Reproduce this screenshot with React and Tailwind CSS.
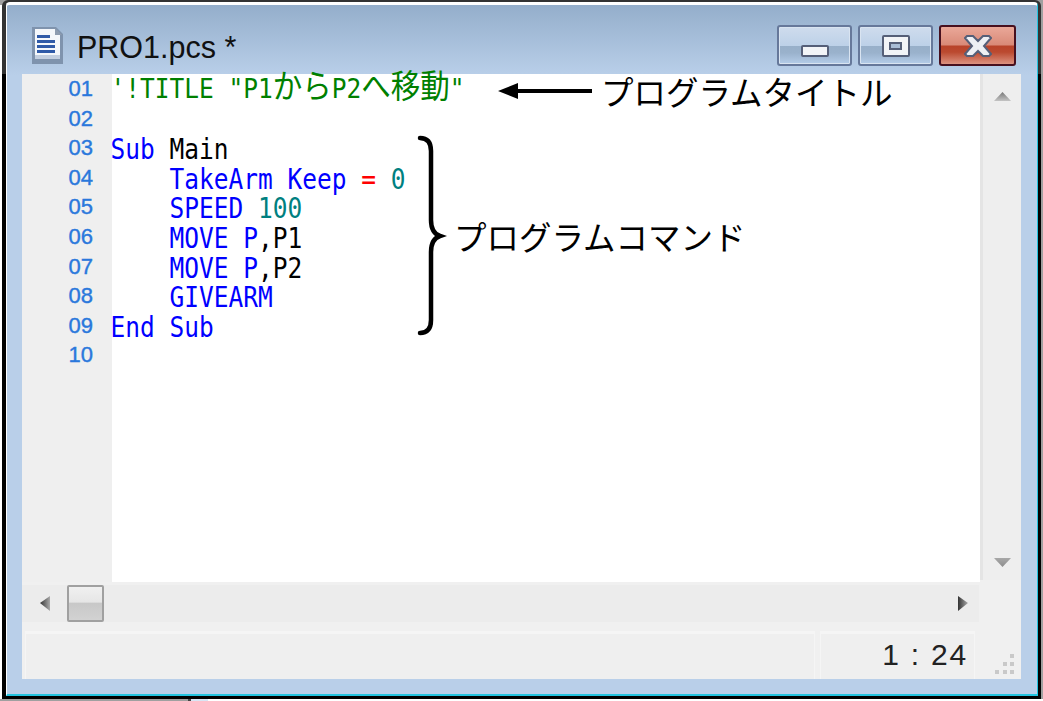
const lineNumbers = ['01', '02', '03', '04', '05', '06', '07', '08', '09', '10']

function Wide({ children }) {
  return <span className="text-[29.5px] leading-none" style={{ fontFamily: '"Noto Sans CJK JP", sans-serif' }}>{children}</span>
}

function CodeLine({ children, up }) {
  return (
    <div className="h-[29.6px] leading-[29.6px] whitespace-pre">
      <span className={up ? 'inline-block origin-center -translate-x-[1.5px] -translate-y-[4px] scale-y-[1.1] leading-[25px]' : 'inline-block origin-center -translate-x-[1.5px] translate-y-[1px] scale-y-[1.18] leading-[25px]'}>{children}</span>
    </div>
  )
}

function DocIcon() {
  return (
    <svg width="31" height="37" viewBox="0 0 31 37" className="shrink-0">
      <path d="M0 0H24L31 7V37H0Z" fill="#7f93ad" />
      <path d="M3 2H23L28 7V32H3Z" fill="#f4f7fb" />
      <path d="M3 28H28V32H3Z" fill="#c3cfe0" />
      <path d="M23 1L30 8H23Z" fill="#8d9cb0" />
      <g fill="#2f5aa8">
        <rect x="5" y="8" width="13" height="3" />
        <rect x="5" y="13" width="18" height="3" />
        <rect x="5" y="18" width="18" height="3" />
        <rect x="5" y="23" width="18" height="3" />
      </g>
    </svg>
  )
}

function CaptionButton({ children }) {
  return (
    <div className="flex h-[41px] w-[75px] items-center justify-center rounded-[3px] border-2 border-[#66789a] bg-[linear-gradient(to_bottom,#cfdced_0%,#bdd1e8_50%,#97afc9_51%,#9ab2cc_70%,#b5cde9_100%)] shadow-[inset_0_0_0_1px_#d9e4f1]">
      {children}
    </div>
  )
}

function Triangle({ points, id, from, to, w = 17, h = 10, x2 = 0, y2 = 1 }) {
  return (
    <svg width={w} height={h} viewBox={`0 0 ${w} ${h}`}>
      <defs>
        <linearGradient id={id} x1="0" y1="0" x2={x2} y2={y2}>
          <stop offset="0" stopColor={from} />
          <stop offset="1" stopColor={to} />
        </linearGradient>
      </defs>
      <polygon points={points} fill={`url(#${id})`} />
    </svg>
  )
}

export default function App() {
  return (
    <div className="relative h-[701px] w-[1043px] overflow-hidden bg-white" style={{ fontFamily: '"Liberation Sans", sans-serif' }}>
      <div className="flex h-[699px] bg-[#a0a0a0]">
        <div className="w-[2px] shrink-0 bg-[linear-gradient(to_bottom,#a0a0a0_5px,#ffffff_5px)]" />

        {/* Window frame */}
        <div className="h-full w-[1039px] shrink-0 rounded-t-[6px] bg-[linear-gradient(to_bottom,#333333_74px,#000000_74px)] pb-[3px] pl-[4px] pr-[3px] pt-[2px]">
          <div className="flex h-full flex-col rounded-t-[4px] border-b-2 border-l border-r border-t-[3px] border-b-[#22c4e0] border-l-white border-r-[#22c4e0] border-t-white bg-[linear-gradient(to_bottom,#94aecb_0px,#b9cfe9_70px,#b9cfe9_100%)] pb-[15px] pl-[15px] pr-[16px]">
            {/* Title bar */}
            <div className="flex h-[69px] shrink-0 items-start pr-[5px]">
              <div className="flex flex-1 items-center pl-[10px] pt-[22px]">
                <DocIcon />
                <span className="ml-[14px] mt-[3px] whitespace-pre text-[30.5px] leading-none text-[#111111]">PRO1.pcs *</span>
              </div>
              <div className="flex gap-[6px] pt-[20px]">
                <CaptionButton>
                  <div className="mt-[10px] h-[12px] w-[28px] rounded-[2px] border-2 border-[#555f78] bg-[#f2f4f7]" />
                </CaptionButton>
                <CaptionButton>
                  <div className="flex h-[22px] w-[28px] items-center justify-center rounded-[2px] border-2 border-[#555f78] bg-[#f2f4f7]">
                    <div className="h-[8px] w-[13px] border-2 border-[#555f78] bg-[#a9bdd6]" />
                  </div>
                </CaptionButton>
                <div className="flex h-[41px] w-[77px] items-center justify-center rounded-[3px] border-2 border-[#47101f] bg-[linear-gradient(to_bottom,#eaa899_0%,#d98a78_48%,#b8432a_52%,#bb4a30_68%,#dc9280_100%)]">
                  <svg width="28" height="22" viewBox="0 0 28 22">
                    <path d="M1 3L3 1H9L14 6L19 1H25L27 3L20 11L27 19L25 21H19L14 16L9 21H3L1 19L8 11Z" fill="#eef0f4" stroke="#555f78" strokeWidth="2" />
                  </svg>
                </div>
              </div>
            </div>

            {/* Client area */}
            <div className="flex min-h-0 flex-1 flex-col bg-[#f0f0f0]">
              <div className="flex h-[511px] shrink-0">
                <div className="flex h-[508px] w-[958px] shrink-0">
                  {/* Line numbers */}
                  <div className="w-[90px] shrink-0 bg-[#efefef] pr-[19px] text-right text-[22px] text-[#2a78dc] [-webkit-text-stroke:0.4px_#2a78dc]">
                    {lineNumbers.map((n) => (
                      <div key={n} className="h-[29.6px] leading-[29.6px]">{n}</div>
                    ))}
                  </div>

                  {/* Code */}
                  <div className="flex-1 bg-white text-[24.5px]" style={{ fontFamily: '"DejaVu Sans Mono", monospace' }}>
                    <CodeLine up>
                      <span className="text-[#008000]">'!TITLE "P1<Wide>か</Wide><Wide>ら</Wide>P2<Wide>へ</Wide><Wide>移</Wide><Wide>動</Wide>"</span>
                    </CodeLine>
                    <CodeLine> </CodeLine>
                    <CodeLine><span className="text-[#0000ff]">Sub</span> <span className="text-black">Main</span></CodeLine>
                    <CodeLine>    <span className="text-[#0000ff]">TakeArm Keep</span> <span className="text-[#ff0000]">=</span> <span className="text-[#008080]">0</span></CodeLine>
                    <CodeLine>    <span className="text-[#0000ff]">SPEED</span> <span className="text-[#008080]">100</span></CodeLine>
                    <CodeLine>    <span className="text-[#0000ff]">MOVE P</span><span className="text-black">,P1</span></CodeLine>
                    <CodeLine>    <span className="text-[#0000ff]">MOVE P</span><span className="text-black">,P2</span></CodeLine>
                    <CodeLine>    <span className="text-[#0000ff]">GIVEARM</span></CodeLine>
                    <CodeLine><span className="text-[#0000ff]">End Sub</span></CodeLine>
                  </div>
                </div>

                {/* Vertical scrollbar */}
                <div className="flex h-[506px] w-[41px] shrink-0 flex-col items-center justify-between border-l-[3px] border-l-[#e4e4e4] bg-[#eeeeee] pb-[12px] pl-[1px] pt-[18px]">
                  <Triangle id="up" points="8.5,0 17,9 0,9" from="#777777" to="#c4c4c4" />
                  <Triangle id="down" points="0,0 17,0 8.5,9" from="#a8a8a8" to="#8c8c8c" />
                </div>
              </div>

              {/* Horizontal scrollbar */}
              <div className="flex h-[37px] w-[957px] shrink-0 items-center bg-[#ececec]">
                <div className="flex w-[45px] shrink-0 justify-center">
                  <Triangle id="left" points="0,7 10,0 10,15" from="#333333" to="#aaaaaa" w={10} h={15} x2={1} y2={0} />
                </div>
                <div className="h-[37px] w-[37px] shrink-0 rounded-[2px] border-2 border-[#a0a0a0] bg-[linear-gradient(to_bottom,#f0f0f0_0%,#e6e6e6_45%,#c8c8c8_50%,#d2d2d2_100%)]" />
                <div className="flex-1" />
                <div className="flex w-[32px] shrink-0 justify-center">
                  <Triangle id="right" points="10,7 0,0 0,15" from="#333333" to="#aaaaaa" w={10} h={15} x2={1} y2={0} />
                </div>
              </div>

              {/* Status bar */}
              <div className="flex min-h-0 flex-1 gap-[5px] pl-[3px] pt-[9px]">
                <div className="w-[790px] shrink-0 border-x border-t-[3px] border-[#f5f5f5] bg-[#efefef]" />
                <div className="flex w-[155px] shrink-0 items-start justify-end border-x border-t-[3px] border-[#f5f5f5] bg-[#efefef] pr-[6px] pt-[3px]">
                  <span className="whitespace-pre text-[30px] leading-[36px] tracking-[1.8px] text-[#222222]">1 : 24</span>
                </div>
                <div className="flex flex-1 items-end justify-end pb-[5px] pr-[6px]">
                  <svg width="20" height="20" viewBox="0 0 20 20" fill="#c9c9c9">
                    <rect x="15" y="0" width="4" height="4" />
                    <rect x="8" y="8" width="4" height="4" />
                    <rect x="15" y="8" width="4" height="4" />
                    <rect x="0" y="16" width="4" height="4" />
                    <rect x="8" y="16" width="4" height="4" />
                    <rect x="15" y="16" width="4" height="4" />
                  </svg>
                </div>
              </div>
            </div>
          </div>
        </div>
      </div>

      {/* Edge of the window below */}
      <div className="flex h-[2px]">
        <div className="w-[188px] bg-[#a0a0a0]" />
        <div className="w-[3px] bg-[#444444]" />
        <div className="w-[17px] bg-[#d8e6f5]" />
      </div>

      {/* Annotations over the code */}
      <svg className="absolute left-[495px] top-[78px]" width="100" height="26" viewBox="0 0 100 26">
        <path d="M3 13L23 5V11H97V15H23V21Z" fill="#000000" />
      </svg>
      <span className="absolute left-[601px] top-[68px] text-[32.5px] leading-[46px] text-black" style={{ fontFamily: '"Noto Sans CJK JP", sans-serif' }}>プログラムタイトル</span>
      <svg className="absolute left-[415px] top-[134px]" width="32" height="204" viewBox="0 0 32 204">
        <path d="M5 4C12 4 16 8 16 17V86C16 95 19 100 25 102C19 104 16 109 16 118V186C16 195 12 199 5 199" fill="none" stroke="#000000" strokeWidth="4.5" strokeLinecap="round" />
      </svg>
      <span className="absolute left-[454px] top-[213px] text-[32.5px] leading-[46px] text-black" style={{ fontFamily: '"Noto Sans CJK JP", sans-serif' }}>プログラムコマンド</span>
    </div>
  )
}
